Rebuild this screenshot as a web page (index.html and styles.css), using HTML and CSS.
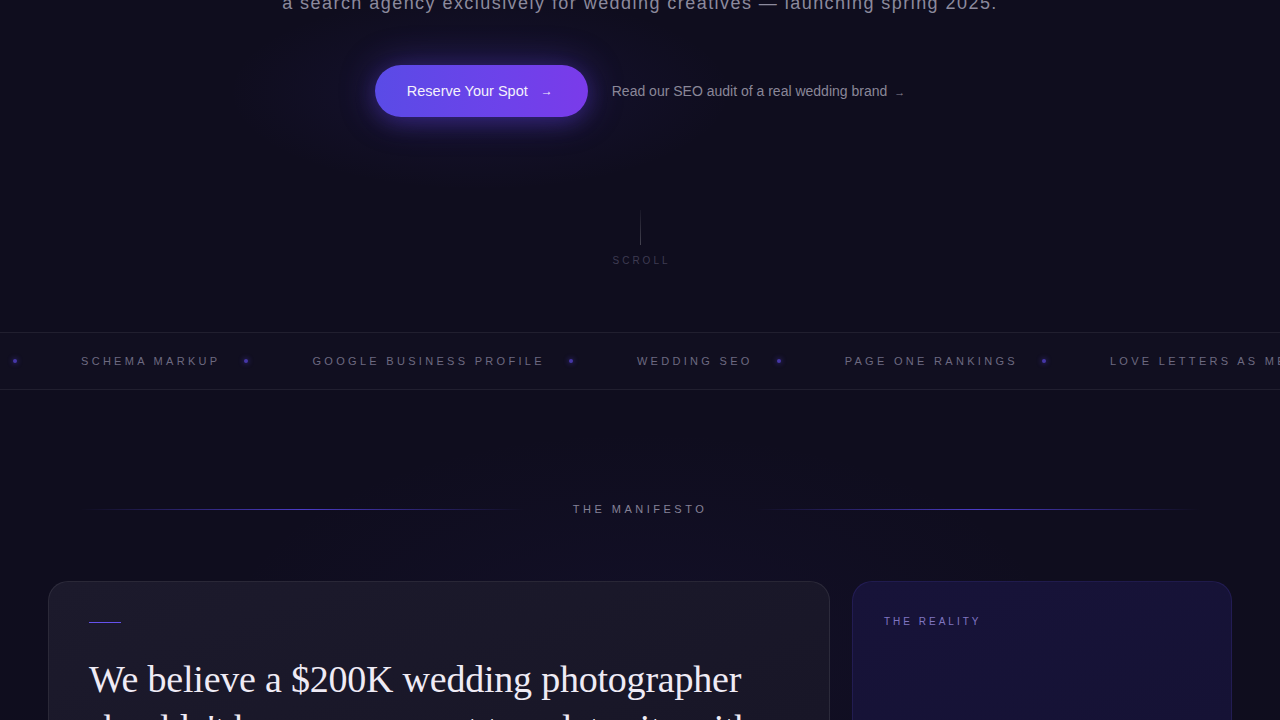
FILE: index.html
```html
<!DOCTYPE html>
<html lang="en">
<head>
<meta charset="utf-8">
<title>Wedding SEO Agency</title>
<link rel="stylesheet" href="styles.css">
</head>
<body>
<section class="hero">
  <p class="hero-sub">a search agency exclusively for wedding creatives — launching spring 2025.</p>
  <div class="cta-row">
    <a class="btn-primary" href="#">Reserve Your Spot <span class="btn-arrow">→</span></a>
    <a class="link-secondary" href="#">Read our SEO audit of a real wedding brand <span class="link-arrow">→</span></a>
  </div>
  <div class="scroll-cue">
    <span class="scroll-line"></span>
    <span class="scroll-text">SCROLL</span>
  </div>
</section>

<div class="marquee">
  <div class="track">
    <span class="dot"></span>
    <span class="word">Schema Markup</span><span class="dot"></span>
    <span class="word">Google Business Profile</span><span class="dot"></span>
    <span class="word">Wedding SEO</span><span class="dot"></span>
    <span class="word">Page One Rankings</span><span class="dot"></span>
    <span class="word">Love Letters as Meta Descriptions</span><span class="dot"></span>
    <span class="word">Schema Markup</span><span class="dot"></span>
  </div>
</div>

<section class="manifesto">
  <div class="section-label">
    <span class="label-line"></span>
    <span class="label-text">The Manifesto</span>
    <span class="label-line"></span>
  </div>
  <div class="cards">
    <article class="card card-main">
      <span class="accent"></span>
      <h2 class="statement">We believe a $200K wedding photographer shouldn't have a worn-out template site with nothing to say to Google.</h2>
    </article>
    <aside class="card card-reality">
      <span class="reality-label">The Reality</span>
      <p class="reality-text">Most wedding brands are invisible past page one.</p>
    </aside>
  </div>
</section>
</body>
</html>
```

FILE: styles.css
```css
* { box-sizing: border-box; }

html, body {
  margin: 0;
  padding: 0;
}

body {
  background:
    radial-gradient(ellipse 360px 140px at 480px 92px, rgba(80, 60, 210, 0.10), transparent 70%),
    radial-gradient(ellipse 600px 300px at 640px 640px, rgba(60, 45, 150, 0.08), transparent 70%),
    #0f0d1e;
  font-family: "Liberation Sans", Arial, sans-serif;
  color: #e8e4f0;
  height: 720px;
  overflow: hidden;
}

a { text-decoration: none; }

.hero {
  text-align: center;
}

.hero-sub {
  margin: -11px 0 0;
  font-size: 18px;
  line-height: 28px;
  letter-spacing: 1.45px;
  color: #8c8a9d;
}

.cta-row {
  margin-top: 48px;
  display: flex;
  justify-content: center;
  align-items: center;
  gap: 24px;
}

.btn-primary {
  display: inline-flex;
  align-items: center;
  height: 52px;
  padding: 0 35px 0 32px;
  border-radius: 26px;
  background: linear-gradient(90deg, #5a4be6 0%, #6d42ea 60%, #7a3bea 100%);
  color: #f4f1fb;
  font-size: 14.5px;
  box-shadow: 0 0 36px rgba(100, 70, 235, 0.35), 0 6px 20px rgba(90, 60, 220, 0.25);
}

.btn-arrow {
  margin-left: 13px;
  font-size: 12px;
}

.link-secondary {
  color: #8a8798;
  font-size: 14px;
}

.link-arrow {
  margin-left: 3px;
  font-size: 11px;
}

.scroll-cue {
  margin-top: 93px;
  display: flex;
  flex-direction: column;
  align-items: center;
}

.scroll-line {
  width: 1px;
  height: 35px;
  background: linear-gradient(180deg, rgba(255, 255, 255, 0.04), rgba(255, 255, 255, 0.22));
}

.scroll-text {
  margin-top: 9px;
  margin-left: 3px;
  font-size: 10px;
  line-height: 14px;
  letter-spacing: 3px;
  color: #3e3b52;
}

.marquee {
  margin-top: 64px;
  height: 58px;
  border-top: 1px solid rgba(255, 255, 255, 0.07);
  border-bottom: 1px solid rgba(255, 255, 255, 0.07);
  background: rgba(255, 255, 255, 0.012);
  overflow: hidden;
  display: flex;
  align-items: center;
}

.track {
  display: flex;
  align-items: center;
  white-space: nowrap;
  padding-left: 13px;
}

.word {
  font-size: 11px;
  letter-spacing: 3.3px;
  text-transform: uppercase;
  color: #6d6a80;
  margin-right: 24px;
}

.dot {
  flex: none;
  width: 4px;
  height: 4px;
  border-radius: 50%;
  background: #4637a8;
  box-shadow: 0 0 5px 1px rgba(70, 55, 180, 0.45);
  margin-right: 64px;
}

.manifesto {
  padding: 0 48px;
}

.section-label {
  margin: 112px auto 0;
  width: 1120px;
  display: flex;
  align-items: center;
  gap: 48px;
}

.label-line {
  flex: 1;
  height: 1px;
  background: linear-gradient(90deg, transparent, #4b3cc8, transparent);
}

.label-text {
  font-size: 11px;
  line-height: 14px;
  letter-spacing: 3.5px;
  text-transform: uppercase;
  color: #858297;
}

.cards {
  margin-top: 65px;
  display: grid;
  grid-template-columns: minmax(0, 1fr) 380px;
  gap: 22px;
}

.card {
  border-radius: 20px;
  min-height: 420px;
}

.card-main {
  background: linear-gradient(160deg, #1c1a2c 0%, #181627 60%, #161424 100%);
  border: 1px solid rgba(255, 255, 255, 0.08);
  padding: 40px;
}

.accent {
  display: block;
  width: 32px;
  height: 1px;
  background: #6552ee;
}

.statement {
  margin: 32px 0 0;
  font-family: "Liberation Serif", "Times New Roman", serif;
  font-weight: 400;
  font-size: 38px;
  line-height: 1.3;
  letter-spacing: -0.22px;
  color: #efebf5;
}

.card-reality {
  background: linear-gradient(160deg, #171339 0%, #151234 60%, #13102d 100%);
  border: 1px solid rgba(100, 80, 230, 0.16);
  padding: 33px 31px;
}

.reality-label {
  display: block;
  font-size: 10px;
  line-height: 13px;
  letter-spacing: 3px;
  text-transform: uppercase;
  color: #8076c2;
}

.reality-text {
  margin: 120px 0 0;
  font-family: "Liberation Serif", "Times New Roman", serif;
  font-size: 28px;
  color: #e8e4f0;
}
```
